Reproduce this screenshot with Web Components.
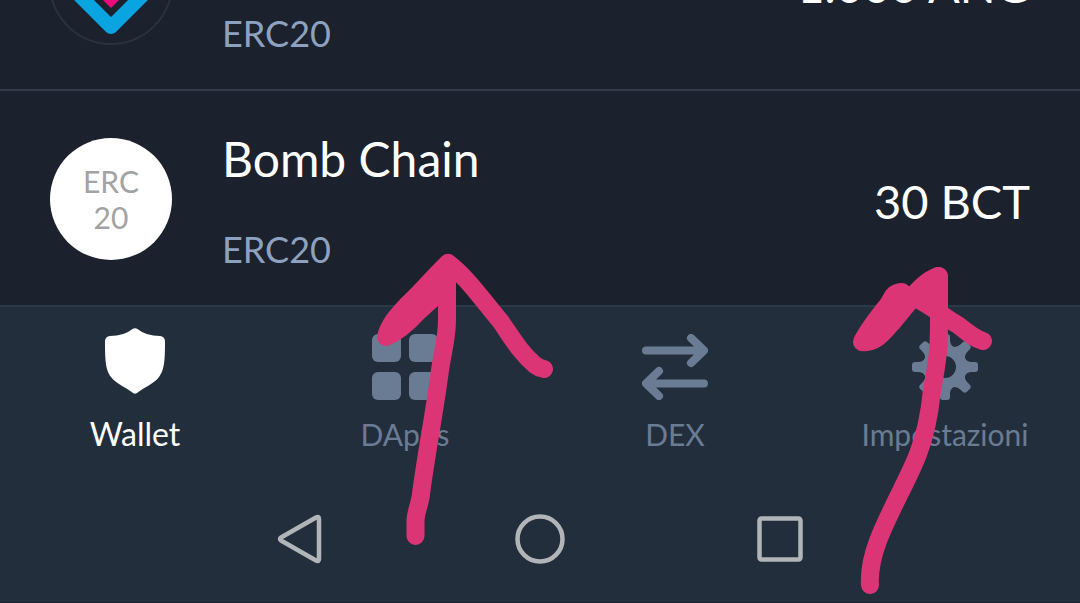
<!DOCTYPE html>
<html lang="it">
<head>
<meta charset="utf-8">
<meta name="viewport" content="width=device-width, initial-scale=1">
<title>Wallet</title>
<style>
  body { margin: 0; background: #1b222d; font-family: Lato, "Open Sans", sans-serif; }
</style>
</head>
<body>
<wallet-screen>
  <token-row slot="tokens">
    <svg slot="logo" width="122" height="122" viewBox="0 0 122 122" overflow="visible" aria-hidden="true">
      <circle cx="61" cy="61" r="61" fill="none" stroke="#2a3240" stroke-width="2"/>
      <path d="M16 60L61 105L106 60" fill="none" stroke="#0aa5e1" stroke-width="14" stroke-linejoin="round"/>
      <path d="M61 86L36 61L61 36L86 61Z" fill="#ec0b7c"/>
    </svg>
    <span slot="name">Token</span>
    <span slot="kind">ERC20</span>
    <span slot="amount">1.000 ANG</span>
  </token-row>
  <token-row slot="tokens">
    <token-badge slot="logo">ERC<br>20</token-badge>
    <span slot="name">Bomb Chain</span>
    <span slot="kind">ERC20</span>
    <span slot="amount">30 BCT</span>
  </token-row>

  <tab-bar slot="footer">
    <tab-item active>
      <svg slot="icon" width="66" height="66" viewBox="0 0 66 66" aria-hidden="true">
        <path fill="currentColor" d="M30.500 1Q33 -.5 35.500 1Q44 8 58 8Q63 8.500 63 13.500C63 35 62 42 57 49C52 56 42 59 35 65Q33 66.500 31 65C24 59 14 56 9 49C4 42 3 35 3 13.500Q3 8.500 8 8Q22 8 30.500 1Z"/>
      </svg>
      Wallet
    </tab-item>
    <tab-item>
      <svg slot="icon" width="66" height="66" viewBox="0 0 66 66" fill="currentColor" aria-hidden="true">
        <rect width="29" height="28" rx="6"/><rect x="37" width="29" height="28" rx="6"/>
        <rect y="38" width="29" height="28" rx="6"/><rect x="37" y="38" width="29" height="28" rx="6"/>
      </svg>
      DApps
    </tab-item>
    <tab-item>
      <svg slot="icon" width="66" height="66" viewBox="0 0 66 66" fill="none" stroke="currentColor" stroke-width="8" stroke-linecap="round" stroke-linejoin="round" aria-hidden="true">
        <path d="M4 16.500H60M49 4L62 16.500L49 29M62 49.500H6M17 37L4 49.500L17 62"/>
      </svg>
      DEX
    </tab-item>
    <tab-item>
      <svg slot="icon" width="66" height="66" viewBox="-33 -33 66 66" aria-hidden="true">
        <defs>
          <path id="tooth" d="M-9 -19.500Q-5 -22 -5 -27L-5 -30Q-5 -33 -2 -33H2Q5 -33 5 -30L5 -27Q5 -22 9 -19.500Z"/>
        </defs>
        <g fill="currentColor">
          <use href="#tooth"/><use href="#tooth" transform="rotate(45)"/><use href="#tooth" transform="rotate(90)"/><use href="#tooth" transform="rotate(135)"/>
          <use href="#tooth" transform="rotate(180)"/><use href="#tooth" transform="rotate(225)"/><use href="#tooth" transform="rotate(270)"/><use href="#tooth" transform="rotate(315)"/>
        </g>
        <circle r="16.500" fill="none" stroke="currentColor" stroke-width="11"/>
      </svg>
      Impostazioni
    </tab-item>
  </tab-bar>
  <system-bar slot="footer"></system-bar>
  <pen-marks slot="overlay"></pen-marks>
</wallet-screen>

<script>
function define(name, markup, setup) {
  const template = document.createElement('template');
  template.innerHTML = markup;
  customElements.define(name, class extends HTMLElement {
    constructor() {
      super();
      this.attachShadow({ mode: 'open' }).append(template.content.cloneNode(true));
    }
    connectedCallback() { if (setup) setup(this); }
  });
}

define('wallet-screen', `
  <style>
    :host { display: flex; flex-direction: column; position: relative; height: 100vh; overflow: hidden; background: #1b222d; }
    main { flex: 1; min-height: 0; overflow: hidden; display: flex; flex-direction: column; justify-content: flex-end; }
  </style>
  <main><slot name="tokens"></slot></main>
  <slot name="footer"></slot>
  <slot name="overlay"></slot>
`);

define('token-row', `
  <style>
    :host { display: flex; flex: none; align-items: center; gap: 50px; box-sizing: border-box; height: 216px; padding: 2px 50px 0; border-top: 2px solid #323b4a; }
    .logo { flex: none; width: 122px; height: 122px; }
    .text { flex: 1; display: flex; flex-direction: column; gap: 38px; padding-top: 2px; }
    .name { font-size: 48px; line-height: 60px; color: #fff; }
    .kind { font-size: 36px; line-height: 44px; color: #8fa1c0; }
    .amount { padding-top: 4px; font-size: 47px; line-height: 60px; color: #fff; }
  </style>
  <div class="logo"><slot name="logo"></slot></div>
  <div class="text">
    <div class="name"><slot name="name"></slot></div>
    <div class="kind"><slot name="kind"></slot></div>
  </div>
  <div class="amount"><slot name="amount"></slot></div>
`);

define('token-badge', `
  <style>
    :host { display: grid; place-content: center; width: 122px; height: 122px; border-radius: 50%; background: #fff; color: #a3a3a3; font-size: 30px; line-height: 36px; text-align: center; }
  </style>
  <div><slot></slot></div>
`);

define('tab-bar', `
  <style>
    :host { display: block; border-top: 2px solid #2b3848; background: #232e3c; }
    nav { display: grid; grid-template-columns: repeat(4, 1fr); height: 168px; }
  </style>
  <nav><slot></slot></nav>
`);

define('tab-item', `
  <style>
    :host { display: block; --ink: #6a7c93; }
    :host([active]) { --ink: #fff; }
    button { display: flex; flex-direction: column; align-items: center; gap: 14px; width: 100%; padding: 27px 0 0; border: 0; background: none; color: var(--ink); font: inherit; font-size: 30px; line-height: 40px; }
    :host([active]) button { padding-top: 21px; gap: 20px; font-size: 32px; }
    ::slotted(svg) { display: block; }
  </style>
  <button type="button"><slot name="icon"></slot><span><slot></slot></span></button>
`, el => { if (el.hasAttribute('active')) el.shadowRoot.querySelector('button').setAttribute('aria-current', 'page'); });

define('system-bar', `
  <style>
    :host { display: block; background: #232e3c; border-bottom: 1px solid #1b222d; }
    nav { display: grid; grid-template-columns: repeat(3, 1fr); width: 66.67%; height: 127px; margin: 0 auto; }
    button { display: flex; justify-content: center; padding: 38px 0 0; border: 0; background: none; color: #b2b5b8; }
    svg { display: block; fill: none; stroke: currentColor; stroke-width: 4.5; stroke-linejoin: round; }
  </style>
  <nav>
    <button type="button" aria-label="Indietro"><svg width="52" height="52" viewBox="0 0 52 52"><path d="M7 24.500Q5 26 7 27.500L42 47.500Q45 49 45 46V6Q45 3 42 4.500Z"/></svg></button>
    <button type="button" aria-label="Home"><svg width="52" height="52" viewBox="0 0 52 52"><circle cx="26" cy="26" r="22.500"/></svg></button>
    <button type="button" aria-label="Recenti"><svg width="52" height="52" viewBox="0 0 52 52"><rect x="5.500" y="5.500" width="41" height="41" rx="2"/></svg></button>
  </nav>
`);

define('pen-marks', `
  <style>
    :host { position: absolute; inset: 0; pointer-events: none; }
    svg { display: block; width: 100%; height: 100%; }
  </style>
  <svg viewBox="0 0 1080 603" fill="none" stroke="#db3575" stroke-width="18" stroke-linecap="round" stroke-linejoin="round" aria-hidden="true">
    <path d="M415.500 536V520C416 511 420 504 421 494C426 455 435 410 440 370C443 350 447 338 447 320V270"/>
    <path d="M448 263C463 274 475 290 501 322C514 341 521 353 535 365Q539 368 544 369"/>
    <path fill="#db3575" d="M448 263C435 275 424 289 408 304C398 315 389 324 386 337C398 332 409 322 418 312C431 300 440 292 446 286Z"/>
    <path d="M870 585C869 570 872 557 878 541C888 514 909 478 918 454C927 431 930 410 932 390C938 360 939 345 939 322V276"/>
    <path d="M938 276C927 280 919 289 910 299M938 276L931 304"/>
    <path d="M902 294C923 298 940 315 958 325C968 333 975 339 983 341"/>
    <path fill="#db3575" d="M902 292C890 293 893 300 886 307C876 320 867 331 862 342C876 344 884 331 892 323L910 301Z"/>
  </svg>
`);
</script>
</body>
</html>
